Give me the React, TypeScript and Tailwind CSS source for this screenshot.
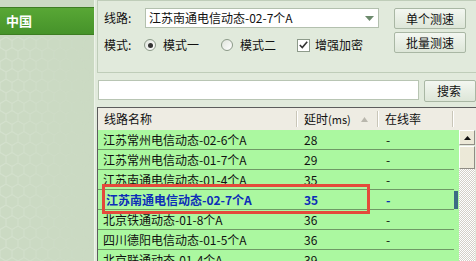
import React from "react";

const rows = [
  { name: "江苏常州电信动态-02-6个A", delay: "28" },
  { name: "江苏常州电信动态-01-7个A", delay: "29" },
  { name: "江苏南通电信动态-01-4个A", delay: "35" },
  { name: "江苏南通电信动态-02-7个A", delay: "35", selected: true },
  { name: "北京铁通动态-01-8个A", delay: "36" },
  { name: "四川德阳电信动态-01-5个A", delay: "36" },
  { name: "北京联通动态-01-4个A", delay: "39" },
];

function Sidebar() {
  return (
    <div className="flex w-[95px] shrink-0 flex-col border-r border-[#edf3e9] bg-[#cbdac3]">
      <div className="mt-[7px] flex h-[28px] items-center border-y border-[#3d7d22] bg-gradient-to-b from-[#58a735] to-[#46932a] pl-[6px] text-[13px] font-bold text-white">
        中国
      </div>
      <svg width="95" height="226" className="mt-[2px]">
        <defs>
          <pattern id="hex" width="12" height="21" patternUnits="userSpaceOnUse">
            <path d="M6 0 L12 3.5 L12 10.5 L6 14 L0 10.5 L0 3.5 Z M6 14 V21" fill="none" stroke="#dbe6d5" strokeWidth="1.2" />
          </pattern>
          <linearGradient id="fade" x1="0" x2="1" y1="0" y2="0">
            <stop offset="0" stopColor="#fff" stopOpacity="0.6" />
            <stop offset="0.6" stopColor="#fff" stopOpacity="0.15" />
            <stop offset="1" stopColor="#fff" stopOpacity="0" />
          </linearGradient>
          <mask id="fm">
            <rect width="95" height="226" fill="url(#fade)" />
          </mask>
        </defs>
        <rect width="95" height="226" fill="url(#hex)" mask="url(#fm)" />
      </svg>
    </div>
  );
}

function Radio({ checked }: { checked?: boolean }) {
  return (
    <span className="flex h-[12px] w-[12px] items-center justify-center rounded-full border border-[#8c9a89] bg-gradient-to-br from-[#dfe4dc] to-white">
      {checked && <span className="h-[5px] w-[5px] rounded-full bg-[#333]" />}
    </span>
  );
}

function Btn({ children, className }: { children: React.ReactNode; className?: string }) {
  return (
    <button
      type="button"
      className={`flex items-center justify-center rounded-[2px] border border-[#a9b7a4] bg-gradient-to-b from-[#f3f7f1] to-[#dde6d8] text-[12px] text-[#111] ${className ?? ""}`}
    >
      {children}
    </button>
  );
}

function TopPanel() {
  return (
    <div className="ml-[2px] flex h-[73px] shrink-0 border border-r-0 border-[#bfcdb9]">
      <div className="flex flex-col pl-[6px] pt-[7px]">
        <div className="flex h-[20px] items-center">
          <span className="w-[41px]">线路:</span>
          <div className="flex h-[20px] w-[234px] items-center justify-between border border-[#b3c0ae] bg-white pl-[3px] pr-[4px]">
            <span>江苏南通电信动态-02-7个A</span>
            <svg width="9" height="5" viewBox="0 0 9 5">
              <path d="M0 0 H9 L4.5 5 Z" fill="#6c8a6c" />
            </svg>
          </div>
        </div>
        <div className="mt-[7px] flex h-[20px] items-center">
          <span className="w-[40px]">模式:</span>
          <Radio checked />
          <span className="ml-[7px]">模式一</span>
          <span className="ml-[22px]">
            <Radio />
          </span>
          <span className="ml-[7px]">模式二</span>
          <span className="ml-[21px] flex h-[13px] w-[13px] items-center justify-center border border-[#8d9a8a] bg-white">
            <svg width="9" height="8" viewBox="0 0 9 8">
              <path d="M0.8 4 L3.3 6.6 L8.2 0.8" fill="none" stroke="#333" strokeWidth="1.6" />
            </svg>
          </span>
          <span className="ml-[5px]">增强加密</span>
        </div>
      </div>
      <div className="ml-[15px] flex flex-col gap-[3px] pt-[7px]">
        <Btn className="h-[21px] w-[72px]">单个测速</Btn>
        <Btn className="h-[21px] w-[72px]">批量测速</Btn>
      </div>
    </div>
  );
}

function SearchRow() {
  return (
    <div className="mt-[7px] flex h-[22px] shrink-0">
      <div className="ml-[3px] h-[20px] w-[325px] border border-[#b8c5b3] bg-white" />
      <Btn className="ml-[5px] h-[22px] w-[52px] shrink-0 justify-start pl-[12px]">搜索</Btn>
    </div>
  );
}

function HeadCell({ w, children }: { w: string; children?: React.ReactNode }) {
  return (
    <div className={`flex h-full shrink-0 items-center justify-between ${w}`}>
      <div className="flex items-center pl-[6px]">{children}</div>
      <span className="h-[16px] w-[2px] border-l border-r border-l-[#c9c6b8] border-r-white" />
    </div>
  );
}

function Table() {
  return (
    <div className="ml-[2px] mt-[5px] flex min-h-0 flex-1 flex-col border-l border-t border-[#5c5c5c]">
      <div className="flex h-[22px] shrink-0 bg-[#eeece3]">
        <HeadCell w="w-[200px]">线路名称</HeadCell>
        <HeadCell w="w-[81px]">
          <span>延时</span>
          <span className="text-[11px]">(ms)</span>
          <svg width="7" height="5" viewBox="0 0 7 5" className="ml-[10px]">
            <path d="M3.5 0 L7 5 H0 Z" fill="#b9b7ad" />
          </svg>
        </HeadCell>
        <HeadCell w="w-[75px]">在线率</HeadCell>
      </div>
      <div className="flex min-h-0 flex-1">
        <div className="relative w-[361px] shrink-0 overflow-hidden">
          {rows.map((r) => (
            <div key={r.name} className="flex h-[20px] bg-[#abf8a0]">
              <div
                className={`flex h-[20px] w-[356px] items-center border-b border-[#6f9a66] ${
                  r.selected ? "font-bold text-[#0c2db8]" : ""
                }`}
              >
                <span className={`w-[200px] shrink-0 ${r.selected ? "pl-[8px]" : "pl-[5px]"}`}>{r.name}</span>
                <span className="w-[81px] shrink-0 pl-[6px]">{r.delay}</span>
                <span className="pl-[7px]">-</span>
              </div>
              {r.selected && <div className="mt-[1px] h-[18px] w-[4px] bg-[#3c6c84]" />}
            </div>
          ))}
          <div className="absolute left-[4px] top-[54px] h-[30px] w-[268px] border-[3px] border-[#e44a3b]" />
        </div>
        <div className="flex w-[16px] shrink-0 flex-col">
          <div className="flex h-[15px] items-center justify-center border border-b-[#8f8d85] border-l-white border-r-[#8f8d85] border-t-white bg-[#ece9d8]">
            <svg width="7" height="4" viewBox="0 0 7 4">
              <path d="M3.5 0 L7 4 H0 Z" fill="#111" />
            </svg>
          </div>
          <div className="mt-[1px] h-[23px] border border-b-[#8f8d85] border-l-white border-r-[#8f8d85] border-t-white bg-[#ece9d8]" />
          <div className="flex-1 bg-[image:repeating-conic-gradient(#d4d0c8_0_25%,#ffffff_0_50%)] bg-[length:2px_2px]" />
        </div>
      </div>
    </div>
  );
}

export default function App() {
  return (
    <div className="flex h-[261px] w-[476px] overflow-hidden bg-[#e1eadc] font-['Noto_Sans_CJK_SC',sans-serif] text-[12px] leading-none text-[#111]">
      <Sidebar />
      <div className="flex min-w-0 flex-1 flex-col">
        <TopPanel />
        <SearchRow />
        <Table />
      </div>
    </div>
  );
}
